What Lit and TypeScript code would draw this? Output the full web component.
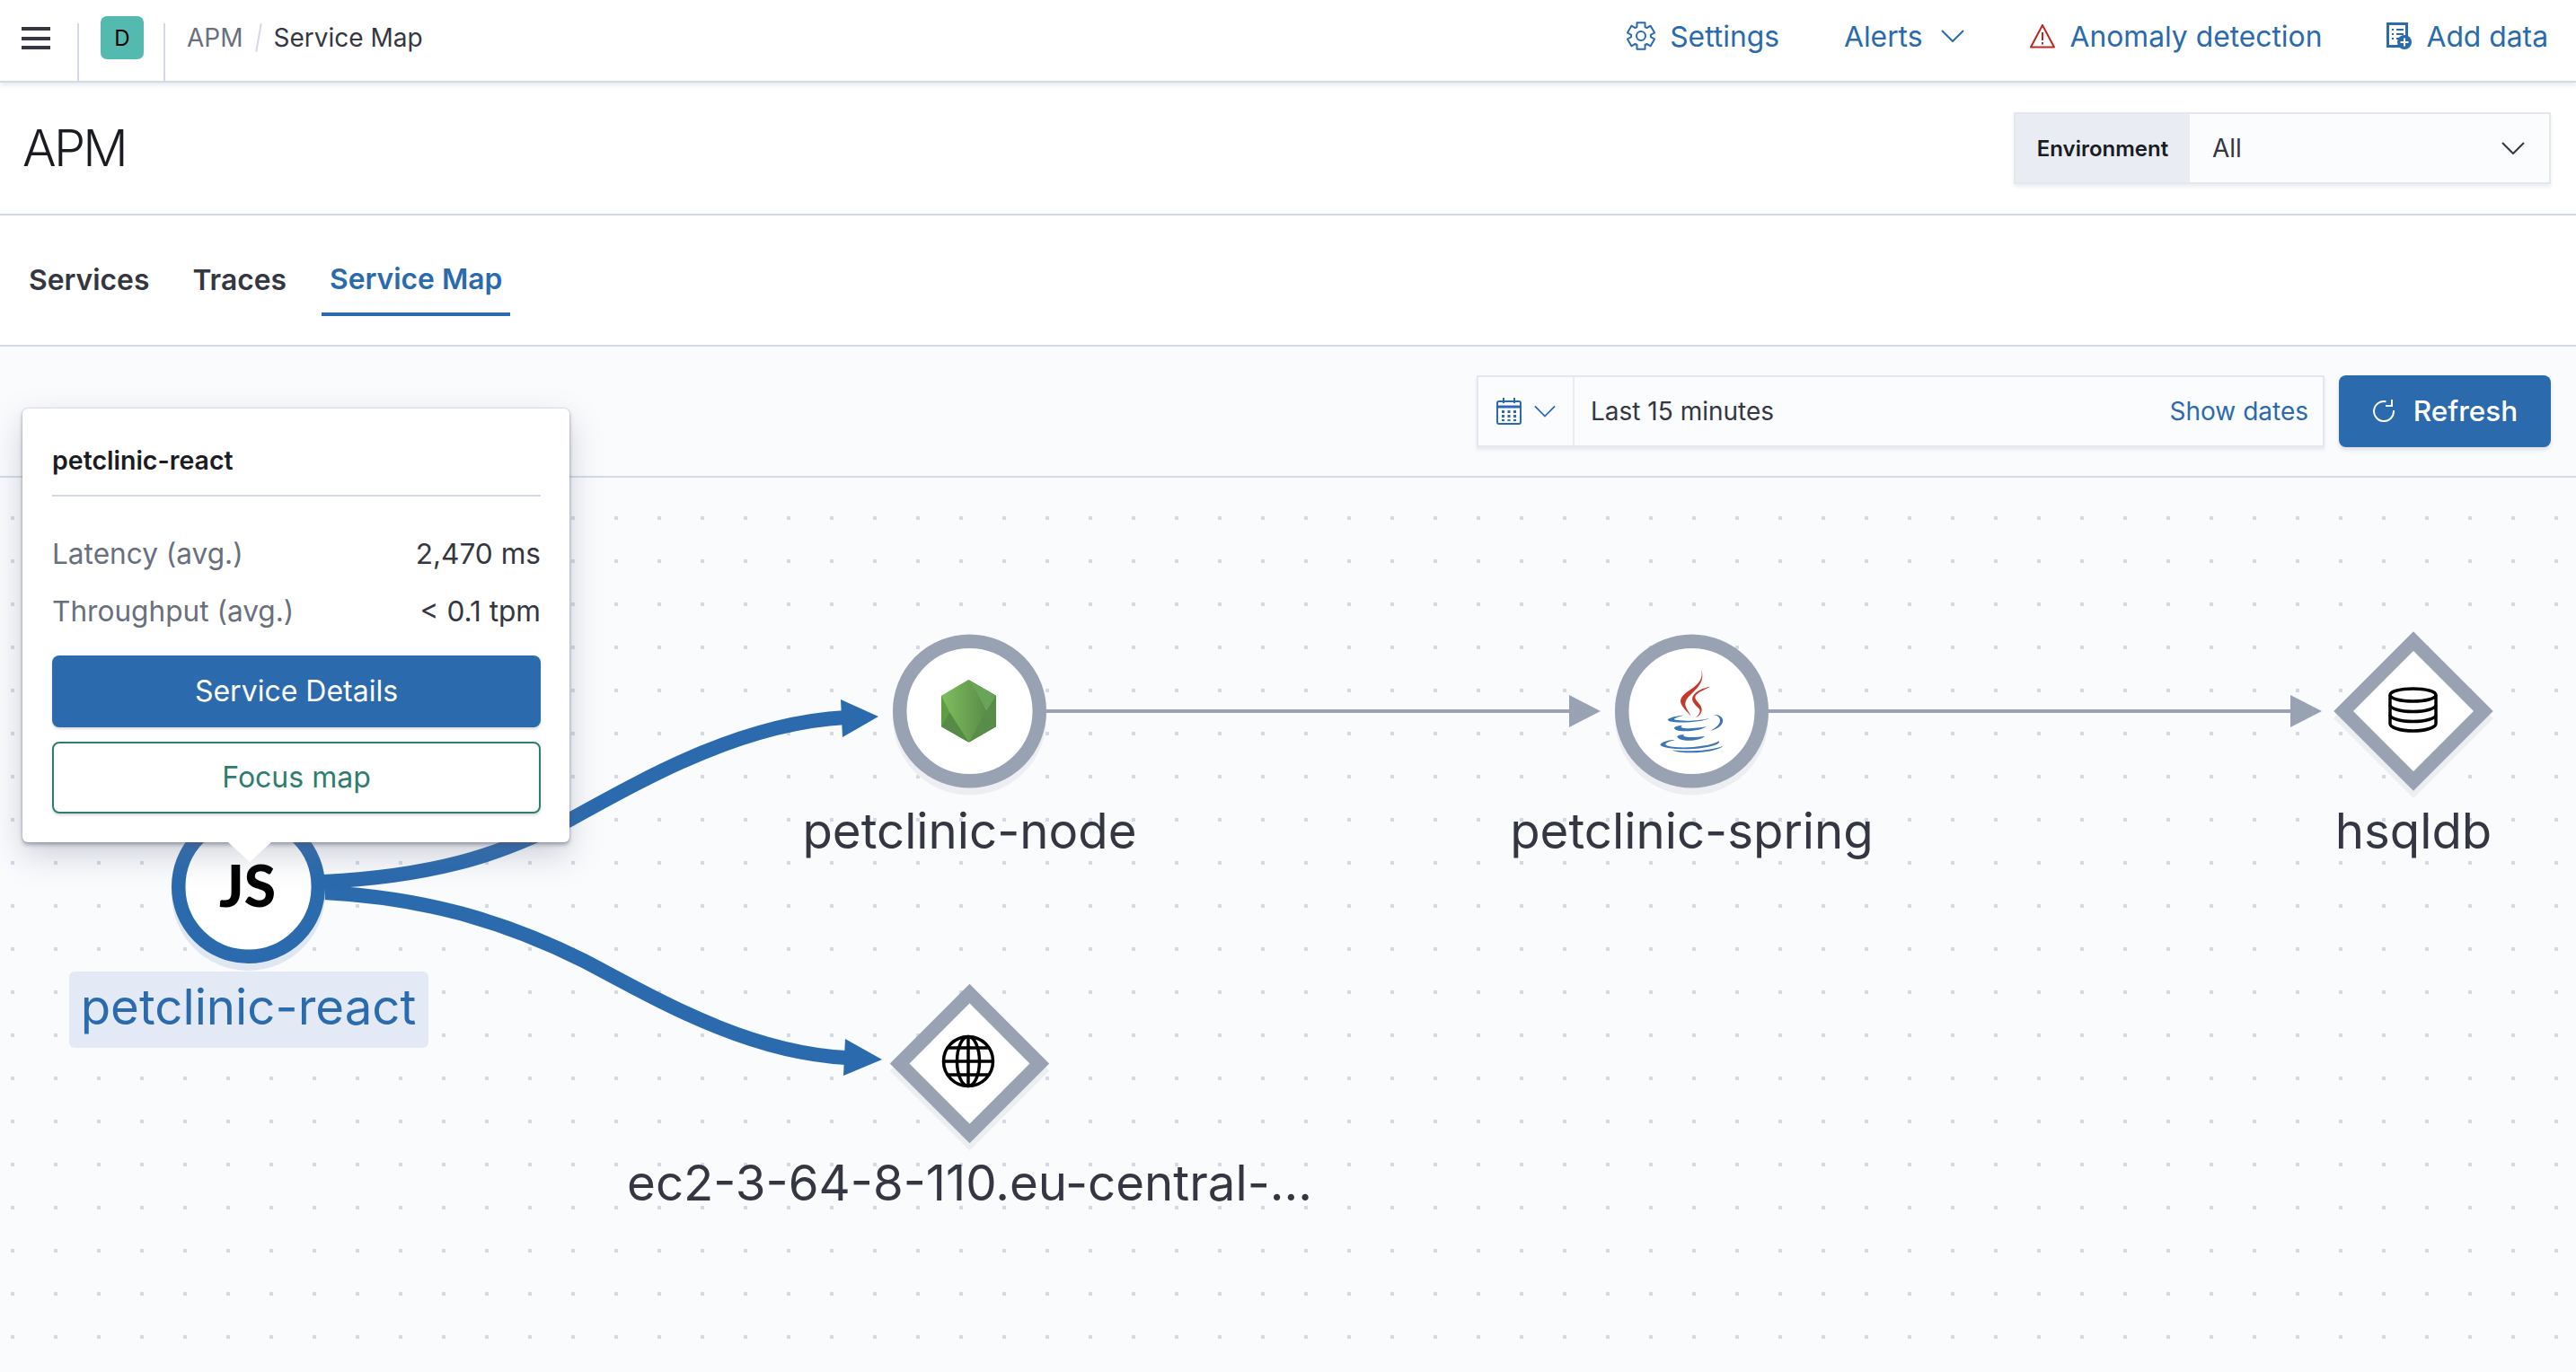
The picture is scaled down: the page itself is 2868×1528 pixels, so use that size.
import { LitElement, html, svg, css } from 'lit';
import { customElement } from 'lit/decorators.js';

const chevron = html`<svg class="chev" width="26" height="14" viewBox="0 0 26 14" fill="none" stroke="currentColor" stroke-width="2"><path d="M1 1l12 12L25 1"/></svg>`;

function gearPath(cx: number, cy: number) {
  // six lobes, drawn as one outline
  const pts: string[] = [];
  for (let i = 0; i < 6; i++) {
    const a = (i * 60 - 90) * Math.PI / 180;
    for (const [d, r] of [[-17, 15.5], [17, 15.5], [24, 11], [36, 11]]) {
      const t = a + d * Math.PI / 180;
      pts.push(`${(cx + Math.cos(t) * r).toFixed(1)} ${(cy + Math.sin(t) * r).toFixed(1)}`);
    }
  }
  return 'M' + pts.join('L') + 'Z';
}

const gear = html`<svg width="32" height="32" viewBox="0 0 32 32" fill="none" stroke="currentColor" stroke-width="2" stroke-linejoin="round"><path d=${gearPath(16, 16)}/><circle cx="16" cy="16" r="5"/></svg>`;
const warning = html`<svg width="30" height="28" viewBox="0 0 30 28" fill="none" stroke="#bd271e" stroke-width="2"><path d="M15 2L2 26.5h26z" stroke-linejoin="round"/><path d="M15 10v9M15 21v2.5"/></svg>`;
const addData = html`<svg width="28" height="30" viewBox="0 0 28 30" fill="none"><path d="M1.5 1.5h21v25h-21z" stroke="currentColor" stroke-width="3"/><path d="M6 8h2M11 8h8M6 13h2M11 13h8M6 18h2M11 18h3" stroke="currentColor" stroke-width="2"/><circle cx="20" cy="22" r="8" fill="currentColor"/><path d="M20 17.500v9M15.500 22h9" stroke="#fff" stroke-width="2"/></svg>`;
const calendar = html`<svg width="28" height="30" viewBox="0 0 28 30" fill="none"><rect x="1" y="4" width="26" height="25" rx="2" stroke="currentColor" stroke-width="2"/><path d="M1 10h26" stroke="currentColor" stroke-width="3"/><path d="M8 0v6M20 0v6" stroke="currentColor" stroke-width="2"/><path d="M6 14h3v3H6zM12.500 14h3v3h-3zM19 14h3v3h-3zM6 19h3v3H6zM12.500 19h3v3h-3zM19 19h3v3h-3zM6 24h3v2H6zM12.500 24h3v2h-3zM19 24h3v2h-3z" fill="currentColor"/></svg>`;
const refresh = html`<svg width="26" height="26" viewBox="0 0 26 26" fill="none" stroke="currentColor" stroke-width="2"><path d="M15.500 3.300A11 11 0 1 0 24 13"/><path d="M22 1v7h-7"/></svg>`;

const nodeLogo = svg`<g transform="translate(950 680) scale(.33333)">
  <defs><linearGradient id="hex" x1="0" x2="1" y1="0" y2="0"><stop offset="0" stop-color="#82bd5f"/><stop offset="1" stop-color="#4f8443"/></linearGradient></defs>
  <path d="M385 231L477 284V388L386 440L294 388V284Z" fill="url(#hex)"/>
  <path d="M322 340L386 440L294 388V370Z" fill="#558a47"/>
  <path d="M294 284L322 340L294 388Z" fill="#5f9e3e"/>
  <path d="M385 231L477 284L445 335L412 272Z" fill="#6aa35a"/>
  <path d="M445 335L477 284V388L386 440Z" fill="#578d49"/>
</g>`;

const javaLogo = svg`<g transform="translate(1760 680) scale(.33333)">
  <g fill="#c5392d">
    <path d="M402 197C410 225 395 245 365 265C335 285 325 300 340 320C350 335 362 345 368 352C360 335 345 322 350 305C355 285 385 270 398 245C408 228 408 210 402 197Z"/>
    <path d="M432 254C410 258 385 268 375 285C365 302 385 318 395 328C402 338 395 348 383 358C400 350 410 335 400 318C392 303 375 295 385 282C395 270 420 262 432 254Z"/>
  </g>
  <g fill="#3d76b8">
    <path d="M290 364C300 355 330 350 345 350C325 355 310 360 312 364C340 372 400 368 428 360C410 372 330 378 295 370Z"/>
    <path d="M442 348C470 345 482 365 470 380C462 392 445 398 432 402C450 392 465 380 465 368C465 355 455 350 442 348Z"/>
    <path d="M312 392C315 386 330 383 340 384C330 388 335 391 345 393C365 395 395 392 418 388C410 396 380 404 345 403C325 402 312 398 312 392Z"/>
    <path d="M322 420C325 416 335 414 345 414C340 418 345 422 360 423C380 424 400 421 414 420C405 430 375 436 350 434C332 432 322 427 322 420Z"/>
    <path d="M265 448C270 438 295 432 315 432C295 437 278 443 285 450C310 462 420 460 462 436C468 445 440 455 400 460C350 466 270 463 265 448Z"/>
    <path d="M305 466C350 472 430 470 475 452C465 465 410 476 360 475C335 475 315 472 305 466Z"/>
  </g>
</g>`;

const dbIcon = svg`<g transform="translate(2659 765)" fill="none" stroke="#000" stroke-width="3.500">
  <ellipse cx="27.500" cy="9" rx="25.500" ry="7"/>
  <path d="M2 9v32c0 4 11 8 25.500 8S53 45 53 41V9"/>
  <path d="M2 20c0 4 11 7.500 25.500 7.500S53 24 53 20M2 31c0 4 11 7.500 25.500 7.500S53 35 53 31"/>
</g>`;

const globeIcon = svg`<g transform="translate(1078 1182)" fill="none" stroke="#000" stroke-width="3.500">
  <circle r="27.500"/>
  <ellipse rx="12.500" ry="27.500"/>
  <path d="M0 -27.500V27.500M-27.500 0H27.500M-23 -15H23M-23 15H23"/>
</g>`;

const circleNode = (x: number, y: number, color: string, shadow: string) => svg`
  <circle cx=${x} cy=${y + 8} r="85.500" fill=${shadow}/>
  <circle cx=${x} cy=${y} r="77.800" fill="#fff" stroke=${color} stroke-width="15.500"/>`;

const diamondPts = (x: number, y: number, r: number) => `${x},${y - r} ${x + r},${y} ${x},${y + r} ${x - r},${y}`;

const diamondNode = (x: number, y: number) => svg`
  <polygon points=${diamondPts(x, y + 8, 88.7)} fill="#eceef2"/>
  <polygon points=${diamondPts(x, y, 77.9)} fill="#fff" stroke="#98a2b3" stroke-width="15.300"/>`;

@customElement('app-root')
export class AppRoot extends LitElement {
  static styles = css`
    :host {
      display: flex;
      flex-direction: column;
      position: relative;
      height: 1528px;
      overflow: hidden;
      background: #fff;
      font-family: Inter, "Noto Sans", sans-serif;
      color: #343741;
      --blue: #2b6aad;
      --line: #d3dae6;
    }
    .top {
      display: flex;
      align-items: stretch;
      height: 92px;
      box-sizing: border-box;
      flex: none;
      border-bottom: 2px solid var(--line);
      box-shadow: 0 2px 6px rgba(152, 162, 179, 0.3);
      position: relative;
      z-index: 1;
      background: #fff;
    }
    .menu {
      width: 32px;
      padding: 30px 30px 0 24px;
      display: flex;
      flex-direction: column;
      gap: 6.500px;
    }
    .menu i {
      display: block;
      height: 4px;
      background: #343741;
    }
    .cell {
      margin-top: 26px;
      border-left: 2px solid var(--line);
    }
    .space {
      width: 94px;
      position: relative;
    }
    .badge {
      position: absolute;
      left: 24px;
      top: -8px;
      width: 48px;
      height: 48px;
      border-radius: 7px;
      background: #54b9ae;
      color: #000;
      font-size: 24px;
      display: flex;
      align-items: center;
      justify-content: center;
    }
    .crumbs {
      display: flex;
      align-items: center;
      height: 84px;
      font-size: 28px;
      margin-left: 24px;
      color: #69707d;
    }
    .crumbs b {
      font-weight: 400;
      color: #343741;
    }
    .slash {
      width: 2px;
      height: 32px;
      margin: 0 16px;
      background: var(--line);
      transform: rotate(10deg);
    }
    .nav {
      margin-left: auto;
      display: flex;
      align-items: center;
      gap: 72px;
      padding: 0 31px 10px 0;
      font-size: 31.800px;
      color: var(--blue);
    }
    .nav div {
      display: flex;
      align-items: center;
      gap: 16px;
    }
    .nav .chev {
      margin-left: 4px;
    }
    .title {
      height: 148px;
      flex: none;
      box-sizing: border-box;
      border-bottom: 2px solid var(--line);
      display: flex;
      align-items: center;
      justify-content: space-between;
      padding: 0 28px 0 25px;
    }
    h1 {
      margin: 0;
      font-size: 56px;
      font-weight: 300;
      letter-spacing: -0.05em;
      color: #1a1c21;
    }
    .env {
      width: 598px;
      height: 80px;
      box-sizing: border-box;
      display: flex;
      border: 2px solid #e4e7ef;
      box-shadow: 0 3px 4px rgba(152, 162, 179, 0.2);
      background: #fbfcfd;
    }
    .env label {
      width: 194px;
      background: #e9edf3;
      color: #1a1c21;
      font-size: 24px;
      font-weight: 600;
      display: flex;
      align-items: center;
      justify-content: center;
    }
    .env span {
      flex: 1;
      font-size: 28px;
      padding: 0 27px 0 25px;
      display: flex;
      align-items: center;
      justify-content: space-between;
    }
    .tabs {
      height: 146px;
      flex: none;
      box-sizing: border-box;
      border-bottom: 2px solid var(--line);
      display: flex;
      gap: 30px;
      padding: 32px 0 0 23px;
    }
    .tab {
      height: 80px;
      box-sizing: border-box;
      padding: 0 9px 2px;
      font-size: 31.800px;
      font-weight: 600;
      display: flex;
      align-items: center;
    }
    .tab.on {
      color: var(--blue);
      border-bottom: 4px solid var(--blue);
      padding-top: 2px;
    }
    .bar {
      height: 146px;
      flex: none;
      box-sizing: border-box;
      border-bottom: 2px solid var(--line);
      background: #fafbfd;
      display: flex;
      align-items: center;
      justify-content: flex-end;
      gap: 16px;
      padding-right: 28px;
    }
    .picker {
      width: 944px;
      height: 80px;
      box-sizing: border-box;
      display: flex;
      align-items: center;
      border: 2px solid #e4e7ef;
      box-shadow: 0 3px 4px rgba(152, 162, 179, 0.2);
      background: #fbfcfd;
      font-size: 28px;
    }
    .quick {
      width: 107px;
      height: 100%;
      box-sizing: border-box;
      flex: none;
      border-right: 2px solid #e9edf3;
      display: flex;
      align-items: center;
      gap: 14px;
      padding-left: 20px;
      color: var(--blue);
    }
    .quick .chev {
      width: 24px;
    }
    .range {
      flex: 1;
      padding-left: 18px;
    }
    .show {
      color: var(--blue);
      padding-right: 16px;
    }
    .refresh {
      width: 236px;
      height: 80px;
      box-sizing: border-box;
      padding-bottom: 2px;
      border-radius: 8px;
      background: var(--blue);
      color: #fff;
      font-size: 31.500px;
      font-weight: 500;
      display: flex;
      align-items: center;
      justify-content: center;
      gap: 20px;
      box-shadow: 0 3px 4px rgba(152, 162, 179, 0.3);
    }
    .map {
      flex: 1;
      position: relative;
      background: #fafbfd;
    }
    .map svg {
      position: absolute;
      inset: 0;
      display: block;
    }
    .map text {
      font-family: Inter, "Noto Sans", sans-serif;
      font-size: 54.600px;
      fill: #343741;
      text-anchor: middle;
    }
    .map text.sel {
      fill: var(--blue);
    }
    .map text.js {
      font-family: Lato, sans-serif;
      font-weight: 900;
      font-size: 64px;
      fill: #000;
    }
    .pop {
      position: absolute;
      left: 25px;
      top: 455px;
      width: 609px;
      height: 483px;
      box-sizing: border-box;
      padding: 38px 32px 0 33px;
      background: #fff;
      border-radius: 6px;
      box-shadow: 0 0 2px rgba(90, 100, 120, 0.45), 0 3px 4px rgba(70, 76, 95, 0.4), 0 14px 36px rgba(100, 110, 135, 0.3);
      z-index: 2;
    }
    .pop::after {
      content: "";
      position: absolute;
      left: 229px;
      top: 100%;
      border: 24px solid transparent;
      border-top: 22px solid #fff;
      border-bottom: 0;
    }
    .pop h2 {
      margin: 0;
      height: 60px;
      box-sizing: border-box;
      line-height: 40px;
      font-size: 28.500px;
      font-weight: 600;
      color: #1a1c21;
      border-bottom: 2px solid var(--line);
    }
    .stats {
      margin-top: 31px;
    }
    .stat {
      height: 64px;
      display: flex;
      align-items: center;
      justify-content: space-between;
      font-size: 31.600px;
    }
    .stat span {
      color: #69707d;
    }
    .btn {
      height: 80px;
      box-sizing: border-box;
      padding-bottom: 2px;
      border-radius: 8px;
      font-size: 32px;
      display: flex;
      align-items: center;
      justify-content: center;
    }
    .btn.fill {
      margin-top: 18px;
      background: var(--blue);
      color: #fff;
      box-shadow: 0 2px 3px rgba(152, 162, 179, 0.4);
    }
    .btn.line {
      margin-top: 16px;
      border: 2px solid #2f7d6e;
      color: #2f7d6e;
      box-shadow: 0 2px 3px rgba(152, 162, 179, 0.4);
    }
  `;

  render() {
    return html`
      <div class="top">
        <div class="menu"><i></i><i></i><i></i></div>
        <div class="cell space"><div class="badge">D</div></div>
        <div class="cell"></div>
        <div class="crumbs">APM<i class="slash"></i><b>Service Map</b></div>
        <div class="nav">
          <div>${gear}Settings</div>
          <div>Alerts${chevron}</div>
          <div>${warning}Anomaly detection</div>
          <div>${addData}Add data</div>
        </div>
      </div>
      <div class="title">
        <h1>APM</h1>
        <div class="env"><label>Environment</label><span>All ${chevron}</span></div>
      </div>
      <div class="tabs">
        <div class="tab">Services</div>
        <div class="tab">Traces</div>
        <div class="tab on">Service Map</div>
      </div>
      <div class="bar">
        <div class="picker">
          <div class="quick">${calendar}${chevron}</div>
          <div class="range">Last 15 minutes</div>
          <div class="show">Show dates</div>
        </div>
        <div class="refresh">${refresh}Refresh</div>
      </div>
      <div class="map">
        <svg width="2868" height="996" viewBox="0 532 2868 996">
          <defs>
            <pattern id="dots" patternUnits="userSpaceOnUse" x="12" y="-1" width="48" height="48">
              <rect width="4" height="4" fill="#d3dae6"/>
            </pattern>
          </defs>
          <rect x="0" y="532" width="2868" height="996" fill="url(#dots)"/>

          <g fill="none" stroke="#98a2b3" stroke-width="4">
            <path d="M1165 792H1750"/>
            <path d="M1969 792H2553"/>
          </g>
          <g fill="#98a2b3">
            <polygon points="1782,792 1747,774 1747,810"/>
            <polygon points="2585,792 2550,774 2550,810"/>
          </g>

          <g fill="none" stroke="#2b6aad" stroke-width="16">
            <path d="M360 982C500 975 570 945 636 912C730 860 830 805 942 799"/>
            <path d="M360 994C480 1000 570 1030 650 1070C730 1112 830 1172 942 1178"/>
          </g>
          <g fill="#2b6aad">
            <polygon points="978,798 936,779 938,821"/>
            <polygon points="982,1180 941,1157 939,1198"/>
          </g>

          ${circleNode(276.5, 987.5, '#2b6aad', '#dfe7f3')}
          ${circleNode(1079.5, 792, '#98a2b3', '#eceef2')}
          ${circleNode(1883.5, 792, '#98a2b3', '#eceef2')}
          ${diamondNode(2687, 792)}
          ${diamondNode(1079.5, 1184.5)}

          <text class="js" x="275.500" y="1010">JS</text>
          ${nodeLogo}
          ${javaLogo}
          ${dbIcon}
          ${globeIcon}

          <rect x="77" y="1082" width="400" height="85" rx="6" fill="#e3eaf5"/>
          <text class="sel" x="276.500" y="1141">petclinic-react</text>
          <text x="1079.500" y="945">petclinic-node</text>
          <text x="1883.500" y="945">petclinic-spring</text>
          <text x="2687" y="945">hsqldb</text>
          <text x="1079.500" y="1337">ec2-3-64-8-110.eu-central-...</text>
        </svg>
      </div>
      <div class="pop">
        <h2>petclinic-react</h2>
        <div class="stats">
          <div class="stat"><span>Latency (avg.)</span>2,470 ms</div>
          <div class="stat"><span>Throughput (avg.)</span>&lt; 0.1 tpm</div>
        </div>
        <div class="btn fill">Service Details</div>
        <div class="btn line">Focus map</div>
      </div>
    `;
  }
}
